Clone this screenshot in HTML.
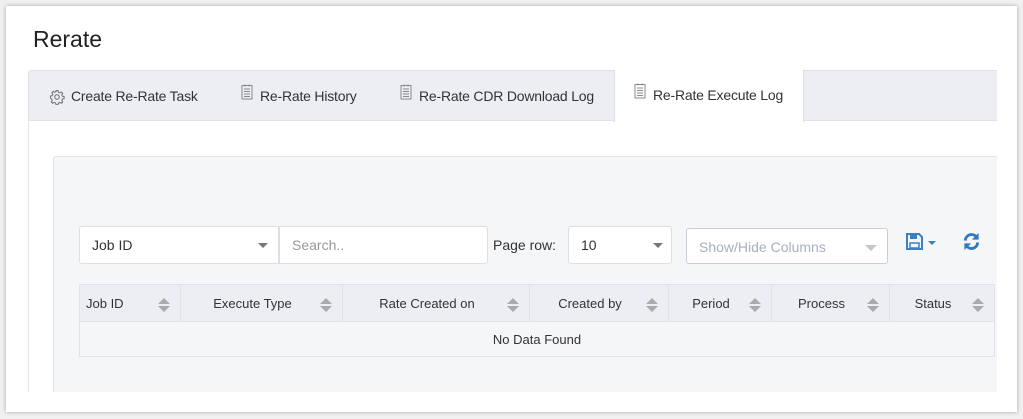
<!DOCTYPE html>
<html><head><style>
*{box-sizing:border-box;margin:0;padding:0}
body{width:1023px;height:419px;background:#f0f0f0;font-family:"Liberation Sans",sans-serif;position:relative;overflow:hidden;color:#333}
.card{position:absolute;left:6px;top:6px;width:1011px;height:406px;background:#fff;box-shadow:0 0 4px rgba(0,0,0,.3)}
.abs{position:absolute}
h1{position:absolute;left:27px;top:20px;font-size:23px;font-weight:normal;color:#222}
.tabs{position:absolute;left:22px;top:64px;width:969px;height:51px;background:#eceef3;border:1px solid #dde0e6;border-bottom:1px solid #dfe2e7;border-right:none;border-radius:3px 0 0 0}
.tab{position:absolute;top:0;height:50px;font-size:14px;color:#333;line-height:50px;letter-spacing:-0.2px}
.panel{position:absolute;left:47px;top:150px;width:944px;height:236px;background:#f5f6f8;border-top:1px solid #e0e3e8;border-left:1px solid #e0e3e8;border-radius:3px 0 0 0}
.leftline{position:absolute;left:22px;top:115px;width:1px;height:271px;background:#e3e5e9}
.box{position:absolute;background:#fff;border:1px solid #dcdfe4;border-radius:3px;font-size:14px;color:#333;line-height:36px;padding-left:12px}
.caret{position:absolute;width:0;height:0;border-left:5px solid transparent;border-right:5px solid transparent;border-top:5px solid #777}
table{position:absolute;left:73px;top:278px;width:916px;border-collapse:collapse;font-size:13px;background:#f5f6f8;border:1px solid #dfe2e7}
th{height:37px;background:#eceef3;font-weight:normal;border-right:1px solid #dfe2e7;border-bottom:1px solid #dfe2e7;position:relative;color:#333;padding-right:18px}
td{height:35px;text-align:center;color:#333}
.sort{position:absolute;right:10px;top:12px;width:12px;height:16px}
</style></head><body>
<div class="card">
<h1>Rerate</h1>
<div class="tabs">
 <div class="tab" style="left:20px">
  <svg class="abs" style="left:0;top:18px" width="16" height="16" viewBox="0 0 16 16" fill="none" stroke="#777" stroke-width="1.1"><circle cx="8" cy="8" r="2.3"/><path d="M7 1.5h2l.4 1.7 1.4.6 1.5-.9 1.4 1.4-.9 1.5.6 1.4 1.7.4v2l-1.7.4-.6 1.4.9 1.5-1.4 1.4-1.5-.9-1.4.6-.4 1.7H7l-.4-1.7-1.4-.6-1.5.9-1.4-1.4.9-1.5-.6-1.4L1.5 9V7l1.7-.4.6-1.4-.9-1.5 1.4-1.4 1.5.9 1.4-.6z"/></svg>
  <span style="position:absolute;left:22px;white-space:nowrap">Create Re-Rate Task</span></div>
 <div class="tab" style="left:212px">
  <svg class="abs" style="left:0;top:13px" width="12" height="16" viewBox="0 0 12 16" fill="none" stroke="#888"><rect x="1" y="1.5" width="10" height="13.5"/><path d="M3 5h6M3 7.5h6M3 10h6M3 12.5h6M4 .5v2M8 .5v2"/></svg>
  <span style="position:absolute;left:19px;white-space:nowrap">Re-Rate History</span></div>
 <div class="tab" style="left:371px">
  <svg class="abs" style="left:0;top:13px" width="12" height="16" viewBox="0 0 12 16" fill="none" stroke="#888"><rect x="1" y="1.5" width="10" height="13.5"/><path d="M3 5h6M3 7.5h6M3 10h6M3 12.5h6M4 .5v2M8 .5v2"/></svg>
  <span style="position:absolute;left:19px;white-space:nowrap">Re-Rate CDR Download Log</span></div>
 <div class="tab" style="left:585px;top:-1px;width:190px;height:52px;background:#fff;border-left:1px solid #dde0e6;border-right:1px solid #dde0e6">
  <svg class="abs" style="left:19px;top:13px" width="12" height="16" viewBox="0 0 12 16" fill="none" stroke="#888"><rect x="1" y="1.5" width="10" height="13.5"/><path d="M3 5h6M3 7.5h6M3 10h6M3 12.5h6M4 .5v2M8 .5v2"/></svg>
  <span style="position:absolute;left:38px;white-space:nowrap">Re-Rate Execute Log</span></div>
</div>
<div class="leftline"></div>
<div class="panel"></div>
<div class="box" style="left:73px;top:220px;width:200px;height:38px;border-radius:3px 0 0 3px">Job ID<div class="caret" style="left:178px;top:16px"></div></div>
<div class="box" style="left:273px;top:220px;width:209px;height:38px;color:#999;border-radius:0 3px 3px 0">Search..</div>
<div class="abs" style="left:487px;top:231px;font-size:14px">Page row:</div>
<div class="box" style="left:562px;top:220px;width:104px;height:38px">10<div class="caret" style="left:84px;top:16px"></div></div>
<div class="box" style="left:680px;top:222px;width:202px;height:36px;color:#a8b0bd;border-color:#c8ced8;line-height:36px">Show/Hide Columns<div class="caret" style="left:178px;top:16px;border-top:6px solid #c2c8d2;border-left-width:6px;border-right-width:6px"></div></div>
<svg class="abs" style="left:900px;top:227px" width="34" height="18" viewBox="0 0 34 18"><path d="M1 1h12l3 3v12H1z" fill="none" stroke="#3b7ec3" stroke-width="2"/><rect x="4" y="2" width="7" height="4" fill="#3b7ec3"/><rect x="4" y="10" width="9" height="5" fill="none" stroke="#3b7ec3" stroke-width="1.5"/><path d="M22 8h8l-4 4z" fill="#3b7ec3"/></svg>
<svg class="abs" style="left:956px;top:226px" width="19" height="19" viewBox="0 0 20 20"><path d="M3.5 9A6.5 6.5 0 0 1 15 5" fill="none" stroke="#2f78c4" stroke-width="3"/><path d="M17.5 1v7h-7z" fill="#2f78c4"/><path d="M16.5 11A6.5 6.5 0 0 1 5 15" fill="none" stroke="#2f78c4" stroke-width="3"/><path d="M2.5 19v-7h7z" fill="#2f78c4"/></svg>
<table>
<tr>
<th style="width:101px;text-align:left;padding-left:6px">Job ID<svg class="sort" viewBox="0 0 12 16"><path d="M6 1l6 6H0z M0 9h12l-6 6z" fill="#aaa"/></svg></th>
<th style="width:162px">Execute Type<svg class="sort" viewBox="0 0 12 16"><path d="M6 1l6 6H0z M0 9h12l-6 6z" fill="#aaa"/></svg></th>
<th style="width:187px">Rate Created on<svg class="sort" viewBox="0 0 12 16"><path d="M6 1l6 6H0z M0 9h12l-6 6z" fill="#aaa"/></svg></th>
<th style="width:139px">Created by<svg class="sort" viewBox="0 0 12 16"><path d="M6 1l6 6H0z M0 9h12l-6 6z" fill="#aaa"/></svg></th>
<th style="width:103px">Period<svg class="sort" viewBox="0 0 12 16"><path d="M6 1l6 6H0z M0 9h12l-6 6z" fill="#aaa"/></svg></th>
<th style="width:118px">Process<svg class="sort" viewBox="0 0 12 16"><path d="M6 1l6 6H0z M0 9h12l-6 6z" fill="#aaa"/></svg></th>
<th style="border-right:none">Status<svg class="sort" viewBox="0 0 12 16"><path d="M6 1l6 6H0z M0 9h12l-6 6z" fill="#aaa"/></svg></th>
</tr>
<tr><td colspan="7">No Data Found</td></tr>
</table>
</div>
</body></html>
